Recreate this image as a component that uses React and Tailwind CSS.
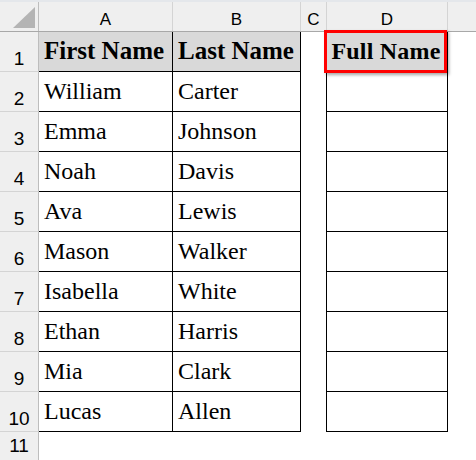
import React from 'react';

const people = [
  ['William', 'Carter'],
  ['Emma', 'Johnson'],
  ['Noah', 'Davis'],
  ['Ava', 'Lewis'],
  ['Mason', 'Walker'],
  ['Isabella', 'White'],
  ['Ethan', 'Harris'],
  ['Mia', 'Clark'],
  ['Lucas', 'Allen'],
];

const serif = { fontFamily: '"Liberation Serif", "Times New Roman", serif' };

function RowHead({ n, last }) {
  return (
    <div
      className={`w-[39px] shrink-0 flex justify-center bg-[#efefef] border-r border-[#bdbdbd] text-[19px] leading-[19px] text-black ${last ? 'items-start pt-[4px]' : 'items-end pb-[3px] border-b border-b-[#d4d4d4]'}`}
      style={{ fontFamily: '"Liberation Sans", Arial, sans-serif' }}
    >
      {n}
    </div>
  );
}

export default function App() {
  return (
    <div className="w-[476px] h-[460px] overflow-hidden bg-white flex flex-col">
      {/* column headers */}
      <div
        className="h-[32px] shrink-0 flex bg-[#efefef] border-t-2 border-t-[#e4e7eb] border-b border-b-[#a8a8a8] text-[17px] leading-[16px] text-black"
        style={{ fontFamily: '"Liberation Sans", Arial, sans-serif' }}
      >
        <div className="w-[39px] shrink-0 border-r border-[#bdbdbd] relative">
          <svg className="absolute left-[13px] top-[5px]" width="23" height="21" viewBox="0 0 23 21">
            <polygon points="22,0 22,21 0,21" fill="#b4b4b4" />
          </svg>
        </div>
        <div className="w-[134px] shrink-0 border-r border-[#d4d4d4] flex justify-center pt-[10px]">A</div>
        <div className="w-[128px] shrink-0 border-r border-[#d4d4d4] flex justify-center pt-[10px]">B</div>
        <div className="w-[26px] shrink-0 border-r border-[#d4d4d4] flex justify-center pt-[10px]">C</div>
        <div className="w-[121px] shrink-0 border-r border-[#d4d4d4] flex justify-center pt-[10px]">D</div>
        <div className="flex-1" />
      </div>

      {/* header row 1 */}
      <div className="h-[40px] shrink-0 flex" style={serif}>
        <RowHead n={1} />
        <div className="w-[134px] shrink-0 bg-[#d9d9d9] border-r border-b border-black flex items-center pl-[5px] pb-[2px] text-[25px] leading-[24px] font-bold">
          First Name
        </div>
        <div className="w-[128px] shrink-0 bg-[#d9d9d9] border-r border-b border-black flex items-center pl-[5px] pb-[2px] text-[25px] leading-[24px] font-bold">
          Last Name
        </div>
        <div className="w-[25px] shrink-0" />
        <div className="w-[122px] shrink-0 relative bg-[#d9d9d9] border-l border-r border-b border-black flex items-center justify-center pr-[2px] pb-[2px] text-[24px] leading-[24px] font-bold tracking-[0.2px]">
          Full Name
          <div className="absolute left-[-3px] top-[-2px] w-[123px] h-[43px] border-[3px] border-[#ff0000] shadow-[2px_2px_3px_rgba(0,0,0,0.35)]" />
        </div>
      </div>

      {people.map(([first, last], i) => (
        <div key={first} className="h-[40px] shrink-0 flex text-[24px] leading-[24px] text-black" style={serif}>
          <RowHead n={i + 2} />
          <div className="w-[134px] shrink-0 border-r border-b border-black flex items-center pl-[5px] pb-[2px]">{first}</div>
          <div className="w-[128px] shrink-0 border-r border-b border-black flex items-center pl-[5px] pb-[2px]">{last}</div>
          <div className="w-[25px] shrink-0" />
          <div className="w-[122px] shrink-0 border-l border-r border-b border-black" />
        </div>
      ))}

      <div className="flex-1 flex">
        <RowHead n={11} last />
      </div>
    </div>
  );
}
